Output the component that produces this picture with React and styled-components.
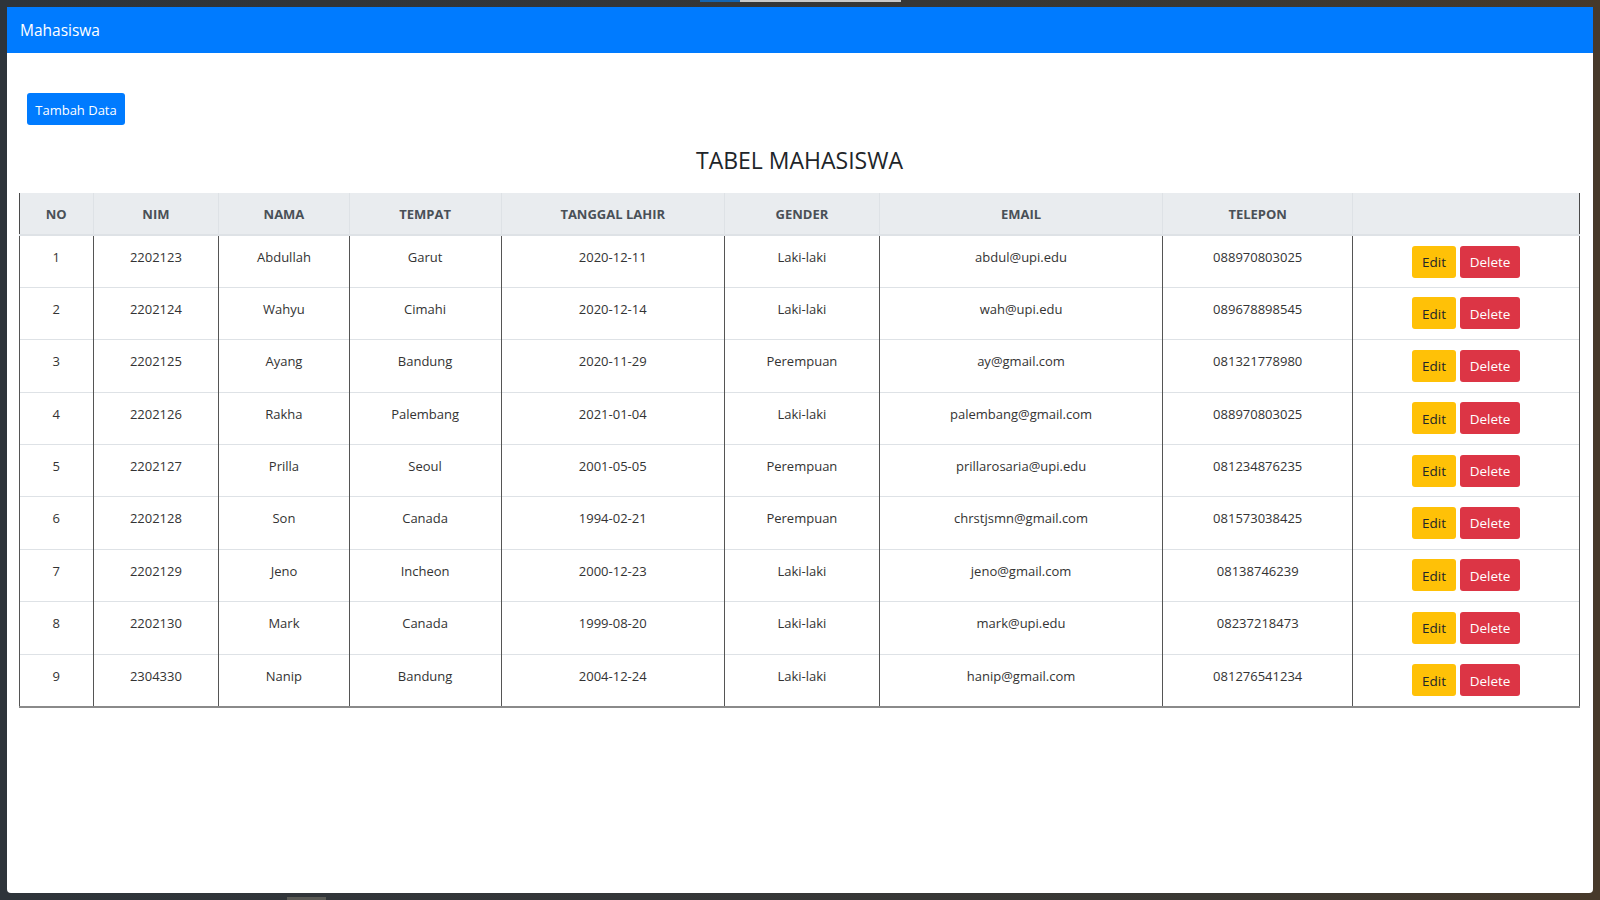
import styled, { createGlobalStyle } from "styled-components";

const GlobalStyle = createGlobalStyle`
    html, body {
        margin: 0;
        padding: 0;
        height: 100%;
    }
    body {
        font-family: "Open Sans", "Noto Sans", sans-serif;
        color: #212529;
    }
`;

const students = [
    { nim: "2202123", nama: "Abdullah", tempat: "Garut", lahir: "2020-12-11", gender: "Laki-laki", email: "abdul@upi.edu", telp: "088970803025" },
    { nim: "2202124", nama: "Wahyu", tempat: "Cimahi", lahir: "2020-12-14", gender: "Laki-laki", email: "wah@upi.edu", telp: "089678898545" },
    { nim: "2202125", nama: "Ayang", tempat: "Bandung", lahir: "2020-11-29", gender: "Perempuan", email: "ay@gmail.com", telp: "081321778980" },
    { nim: "2202126", nama: "Rakha", tempat: "Palembang", lahir: "2021-01-04", gender: "Laki-laki", email: "palembang@gmail.com", telp: "088970803025" },
    { nim: "2202127", nama: "Prilla", tempat: "Seoul", lahir: "2001-05-05", gender: "Perempuan", email: "prillarosaria@upi.edu", telp: "081234876235" },
    { nim: "2202128", nama: "Son", tempat: "Canada", lahir: "1994-02-21", gender: "Perempuan", email: "chrstjsmn@gmail.com", telp: "081573038425" },
    { nim: "2202129", nama: "Jeno", tempat: "Incheon", lahir: "2000-12-23", gender: "Laki-laki", email: "jeno@gmail.com", telp: "08138746239" },
    { nim: "2202130", nama: "Mark", tempat: "Canada", lahir: "1999-08-20", gender: "Laki-laki", email: "mark@upi.edu", telp: "08237218473" },
    { nim: "2304330", nama: "Nanip", tempat: "Bandung", lahir: "2004-12-24", gender: "Laki-laki", email: "hanip@gmail.com", telp: "081276541234" },
];

const columns = [
    { label: "NO", width: 73.5 },
    { label: "NIM", width: 125.8 },
    { label: "NAMA", width: 130.3 },
    { label: "TEMPAT", width: 152 },
    { label: "TANGGAL LAHIR", width: 223.3 },
    { label: "GENDER", width: 155 },
    { label: "EMAIL", width: 283.3 },
    { label: "TELEPON", width: 190 },
    { label: "", width: 226.8 },
];

const App = () => {
    return (
        <>
            <GlobalStyle />
            <Frame>
                <TopStrip>
                    <TabMark />
                </TopStrip>
                <Window>
                    <Navbar>
                        <Brand>Mahasiswa</Brand>
                    </Navbar>
                    <Content>
                        <AddButton>Tambah Data</AddButton>
                        <Title>TABEL MAHASISWA</Title>
                        <StudentTable />
                    </Content>
                </Window>
                <BottomStrip>
                    <BottomMark />
                </BottomStrip>
            </Frame>
        </>
    );
};

const StudentTable = () => {
    return (
        <Table>
            <colgroup>
                {columns.map((c, i) => (
                    <col key={i} style={{ width: c.width }} />
                ))}
            </colgroup>
            <thead>
                <tr>
                    {columns.map((c, i) => (
                        <Th key={i}>{c.label}</Th>
                    ))}
                </tr>
            </thead>
            <tbody>
                {students.map((s, i) => (
                    <tr key={s.nim}>
                        <Td>{i + 1}</Td>
                        <Td>{s.nim}</Td>
                        <Td>{s.nama}</Td>
                        <Td>{s.tempat}</Td>
                        <Td>{s.lahir}</Td>
                        <Td>{s.gender}</Td>
                        <Td>{s.email}</Td>
                        <Td>{s.telp}</Td>
                        <ActionCell>
                            <Actions>
                                <ActionButton $variant="edit">Edit</ActionButton>
                                <ActionButton $variant="delete">Delete</ActionButton>
                            </Actions>
                        </ActionCell>
                    </tr>
                ))}
            </tbody>
        </Table>
    );
};

const Frame = styled.div`
    width: 1600px;
    height: 900px;
    display: flex;
    flex-direction: column;
    padding: 0 7px;
    box-sizing: border-box;
    background: linear-gradient(90deg, #2e343a 0%, #343638 40%, #3a3833 75%, #47392a 100%);
`;

const TopStrip = styled.div`
    height: 7px;
    display: flex;
    padding-left: 693px;
`;

const TabMark = styled.div`
    width: 201px;
    height: 2px;
    background: linear-gradient(90deg, #1565b0 0 40px, #c9c9c9 40px 100%);
`;

const BottomStrip = styled.div`
    height: 7px;
    display: flex;
    align-items: flex-end;
    padding-left: 280px;
`;

const BottomMark = styled.div`
    width: 39px;
    height: 3px;
    background: #5a5a55;
`;

const Window = styled.div`
    flex: 1;
    background: #fff;
    border-radius: 0 0 4px 4px;
    display: flex;
    flex-direction: column;
    overflow: hidden;
`;

const Navbar = styled.div`
    height: 46px;
    background: #007bff;
    display: flex;
    align-items: center;
    padding: 0 13px;
`;

const Brand = styled.span`
    color: #fff;
    font-size: 15.5px;
    line-height: 1;
    padding-top: 2px;
`;

const Content = styled.div`
    padding: 40px 13px 0 12px;
    display: flex;
    flex-direction: column;
    align-items: flex-start;
`;

const AddButton = styled.button`
    margin-left: 8px;
    width: 98px;
    height: 32px;
    border: none;
    border-radius: 3px;
    background: #007bff;
    color: #fff;
    font-family: "Open Sans", "Noto Sans", sans-serif;
    font-size: 13px;
    padding: 0;
    padding-top: 1px;
`;

const Title = styled.h3`
    align-self: stretch;
    margin: 0;
    height: 68px;
    display: flex;
    align-items: center;
    justify-content: center;
    font-size: 23px;
    font-weight: 400;
    color: #212529;
    padding-top: 1px;
    box-sizing: border-box;
`;

const Table = styled.table`
    width: 1560.5px;
    table-layout: fixed;
    border-collapse: collapse;
    border-left: 1px solid #4a4a4a;
    border-right: 1px solid #4a4a4a;
    border-bottom: 2px solid #8a8a8a;
    font-size: 13px;
    color: #333;
`;

const Th = styled.th`
    background: #e9ecef;
    color: #495057;
    font-weight: 700;
    font-size: 13px;
    height: 42px;
    padding: 0 8px;
    text-align: center;
    vertical-align: middle;
    border-left: 1px solid #dee2e6;
    border-right: 1px solid #dee2e6;
    border-bottom: 2px solid #dee2e6;
    box-sizing: border-box;
    &:first-child {
        border-left: 1px solid #4a4a4a;
    }
    &:last-child {
        border-right: 1px solid #4a4a4a;
    }
`;

const Td = styled.td`
    height: 52.4px;
    box-sizing: border-box;
    padding: 11px 8px 0;
    line-height: 21px;
    text-align: center;
    vertical-align: top;
    border-left: 1px solid #555;
    border-right: 1px solid #555;
    border-top: 1px solid #dee2e6;
    white-space: nowrap;
`;

const ActionCell = styled(Td)`
    padding-top: 9.5px;
`;

const Actions = styled.div`
    display: flex;
    justify-content: center;
    gap: 4px;
`;

const ActionButton = styled.button`
    width: ${(p) => (p.$variant === "edit" ? "44px" : "60px")};
    height: 32px;
    border: none;
    border-radius: 3px;
    padding: 0;
    padding-top: 1px;
    font-family: "Open Sans", "Noto Sans", sans-serif;
    font-size: 13.5px;
    background: ${(p) => (p.$variant === "edit" ? "#ffc107" : "#dc3545")};
    color: ${(p) => (p.$variant === "edit" ? "#212529" : "#fff")};
`;

export default App;
